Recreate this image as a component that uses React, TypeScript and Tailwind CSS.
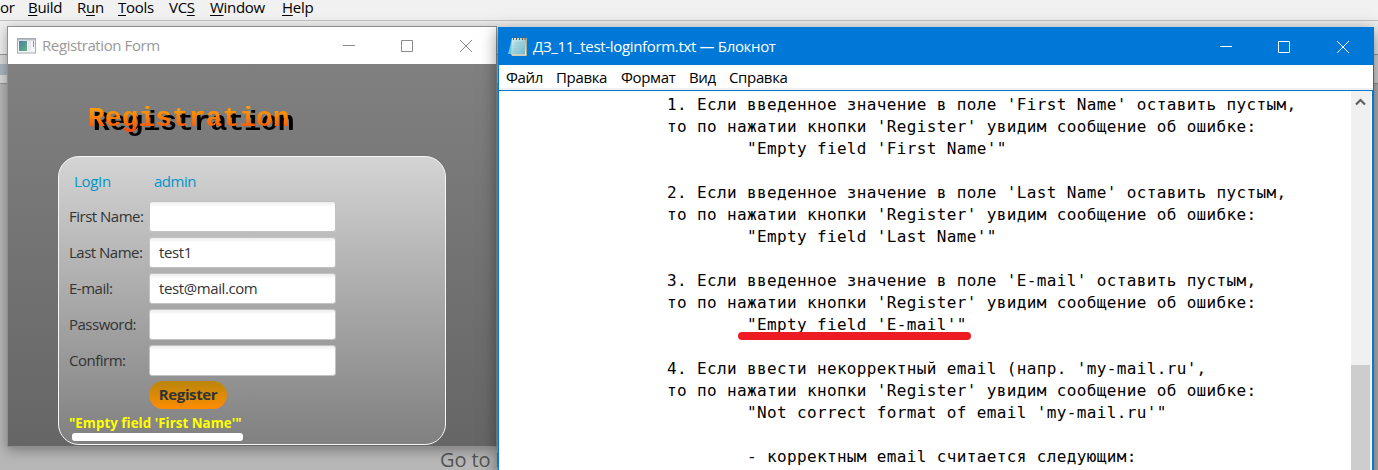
import React from "react";

const ideMenu = [
  { pre: "", key: "B", post: "uild", cls: "left-[28px]" },
  { pre: "R", key: "u", post: "n", cls: "left-[77px]" },
  { pre: "", key: "T", post: "ools", cls: "left-[118px]" },
  { pre: "VC", key: "S", post: "", cls: "left-[169px]" },
  { pre: "", key: "W", post: "indow", cls: "left-[210px]" },
  { pre: "", key: "H", post: "elp", cls: "left-[282px]" },
];

const fields = [
  { label: "First Name:", value: "" },
  { label: "Last Name:", value: "test1" },
  { label: "E-mail:", value: "test@mail.com" },
  { label: "Password:", value: "" },
  { label: "Confirm:", value: "" },
];

const lines = [
  "1. Если введенное значение в поле 'First Name' оставить пустым,",
  "то по нажатии кнопки 'Register' увидим сообщение об ошибке:",
  "        \"Empty field 'First Name'\"",
  "",
  "2. Если введенное значение в поле 'Last Name' оставить пустым,",
  "то по нажатии кнопки 'Register' увидим сообщение об ошибке:",
  "        \"Empty field 'Last Name'\"",
  "",
  "3. Если введенное значение в поле 'E-mail' оставить пустым,",
  "то по нажатии кнопки 'Register' увидим сообщение об ошибке:",
  "        \"Empty field 'E-mail'\"",
  "",
  "4. Если ввести некорректный email (напр. 'my-mail.ru',",
  "то по нажатии кнопки 'Register' увидим сообщение об ошибке:",
  "        \"Not correct format of email 'my-mail.ru'\"",
  "",
  "        - корректным email считается следующим:",
];

function WindowButtons({ className }: { className: string }) {
  return (
    <svg className={className} width="130" height="14" viewBox="0 0 130 14" fill="none" stroke="currentColor" strokeWidth="1">
      <path d="M0 6.5H12M58.5 1.5H69.5V12.5H58.5Z" />
      <path d="M117 1L129 13M129 1L117 13" />
    </svg>
  );
}

function AppIcon() {
  return (
    <svg width="19" height="16" viewBox="0 0 19 16">
      <rect x=".5" y=".5" width="18" height="14.5" fill="#f4f6f8" stroke="#a4abb2" />
      <rect x="1" y="1" width="17" height="1.5" fill="#b7c0c9" />
      <rect x="2" y="3" width="8" height="10" fill="url(#thumb)" />
      <rect x="11" y="3" width="3" height="10" fill="#e6e9ed" />
      <path d="M16.5 3V9" stroke="#6c9fae" />
      <defs>
        <linearGradient id="thumb" x1="0" y1="0" x2="1" y2="1">
          <stop stopColor="#4a80a8" />
          <stop offset="1" stopColor="#63b27d" />
        </linearGradient>
      </defs>
    </svg>
  );
}

function NotepadIcon() {
  return (
    <svg width="20" height="21" viewBox="0 0 20 21">
      <path d="M4 2L0 18H6Z" fill="#72bfdb" />
      <path d="M4 2H19V20H4Z" fill="#b3a78c" />
      <path d="M4 2H17.5L17 18.5H3Z" fill="url(#page)" />
      <path d="M3 18.5H17L18 4V19.5H4Z" fill="#f3eedc" />
      <path d="M6 7H15M6 10H15M5.5 13H15M5 16H15" stroke="#8ac5d2" strokeWidth=".7" />
      <path d="M5.5 .5V4M8.5 .5V4M11.5 .5V4M14.5 .5V4M17 .5V4" stroke="#575f61" strokeWidth="1" />
      <defs>
        <linearGradient id="page" x1="0" y1="0" x2="1" y2="1">
          <stop stopColor="#d8eef0" />
          <stop offset="1" stopColor="#69b8cb" />
        </linearGradient>
      </defs>
    </svg>
  );
}

function RegistrationWindow() {
  return (
    <section className="absolute left-[7px] top-[26px] flex h-[421px] w-[490px] flex-col border border-[#8f8f8f] bg-white shadow-[0_3px_12px_rgba(0,0,0,0.35)]">
      <header className="flex h-[37px] shrink-0 items-center pl-[9px]">
        <AppIcon />
        <span className="ml-[6px] w-[301px] whitespace-nowrap text-[15px] tracking-[-0.4px] text-[#999]">Registration Form</span>
        <WindowButtons className="text-[#8c8c8c]" />
      </header>
      <div className="flex flex-1 flex-col bg-linear-to-b from-[#808080] to-[#666] pl-[50px] pt-[37px]">
        <h1 className="h-[55px] pl-[30px] font-['Liberation_Mono',monospace] text-[28px] leading-[36px] font-bold drop-shadow-[5px_4px_0_#000]">
          <span className="bg-linear-to-b from-[#ff9a00] from-20% to-[#ff4500] to-90% bg-clip-text text-transparent">Registration</span>
        </h1>
        <div className="flex h-[289px] w-[388px] shrink-0 flex-col rounded-[21px] border-[1.5px] border-[#f6f6f6] bg-linear-to-b from-[#d4d4d4] to-[#808080] pl-[10px] pt-[11px] text-[15px] leading-[26px] text-[#333]">
          <div className="flex h-[33px] text-[#0096c9]">
            <span className="w-[80px] pl-[5px] tracking-[-0.3px]">LogIn</span>
            <span className="pl-[5px] tracking-[-0.5px]">admin</span>
          </div>
          {fields.map((f) => (
            <div key={f.label} className="flex h-[36px] items-start">
              <span className="w-[80px] whitespace-nowrap pt-[2px] tracking-[-0.5px]">{f.label}</span>
              <div className="h-[31px] w-[187px] rounded-[3px] border border-[#c2c2c2] bg-white bg-linear-to-b from-[#ececec] to-white to-15% pl-[9px] pt-[1px] tracking-[-0.4px]">{f.value}</div>
            </div>
          ))}
          <button className="ml-[80px] h-[28px] w-[78px] shrink-0 rounded-full bg-linear-to-b from-[#b8860b] to-[#ff8c00] pb-[2px] text-[15px] font-bold tracking-[-0.4px]">Register</button>
          <span className="mt-[1px] whitespace-nowrap text-[13.3px] font-bold tracking-[0.05px] text-[#ffff00]">"Empty field 'First Name'"</span>
          <div className="ml-[3px] mt-[-3px] h-[8px] w-[171px] shrink-0 rounded-[3px] bg-white" />
        </div>
      </div>
    </section>
  );
}

function NotepadWindow() {
  return (
    <section className="absolute left-[498px] top-[27px] flex h-[460px] w-[876px] flex-col border border-[#0078d7] bg-white shadow-[0_4px_16px_rgba(0,0,0,0.5)]">
      <header className="flex h-[37px] shrink-0 items-center bg-[#0078d7] pl-[9px] text-white">
        <NotepadIcon />
        <span className="ml-[5px] w-[687px] whitespace-nowrap text-[15px] tracking-[-0.33px]">ДЗ_11_test-loginform.txt — Блокнот</span>
        <WindowButtons className="text-white" />
      </header>
      <nav className="relative h-[25px] shrink-0 border-b-2 border-[#f0f0f0] text-[15px] leading-[25px] tracking-[-0.35px] text-black">
        <span className="absolute left-[7px]">Файл</span>
        <span className="absolute left-[57px]">Правка</span>
        <span className="absolute left-[122px]">Формат</span>
        <span className="absolute left-[190px]">Вид</span>
        <span className="absolute left-[230px]">Справка</span>
      </nav>
      <div className="flex flex-1 border-r border-t border-[#0078d7]">
        <div className="relative w-[852px] shrink-0 pl-[168px] pt-[3px]">
          {lines.map((line, i) => (
            <div key={i} className="h-[22px] whitespace-pre font-['DejaVu_Sans_Mono',monospace] text-[16px] leading-[22px] tracking-[0.36px] text-black">{line}</div>
          ))}
          <div className="absolute left-[239px] top-[241px] h-[8px] w-[233px] rounded-[4px] bg-[#ed1c24]" />
        </div>
        <div className="flex w-[20px] flex-col bg-[#f0f0f0]">
          <svg className="ml-[4px] mt-[7px]" width="12" height="8" viewBox="0 0 12 8" fill="none" stroke="#606060" strokeWidth="2.2">
            <path d="M1 6.5L5.5 2L10 6.5" />
          </svg>
          <div className="mt-[259px] w-[19px] flex-1 bg-[#cdcdcd]" />
        </div>
      </div>
    </section>
  );
}

export default function App() {
  return (
    <main className="relative h-[470px] w-[1378px] overflow-hidden bg-[#b7b7b7] font-['Open_Sans',sans-serif]">
      <div className="relative h-[20px] bg-[#f1f1f1] text-[15px] leading-[14px] tracking-[-0.3px] text-black">
        <span className="absolute left-0">or</span>
        {ideMenu.map((m) => (
          <span key={m.key} className={"absolute whitespace-nowrap " + m.cls}>
            {m.pre}
            <span className="underline underline-offset-2">{m.key}</span>
            {m.post}
          </span>
        ))}
      </div>
      <div className="h-[35px] border-b border-t border-b-[#9c9c9c] border-t-[#c3c3c3] bg-[#f0f0f0]" />
      <div className="h-[9px] bg-[#dadada]" />
      <div className="h-[11px] w-full bg-linear-to-r from-[#a9b6c1] from-[8px] to-[#dadada] to-[8px]" />
      <div className="h-[9px] border-b border-[#959595] bg-[#dadada]" />
      <span className="absolute left-[440px] top-[447px] whitespace-nowrap text-[20px] leading-[26px] tracking-[-0.1px] text-[#555]">Go to File</span>
      <RegistrationWindow />
      <NotepadWindow />
    </main>
  );
}
